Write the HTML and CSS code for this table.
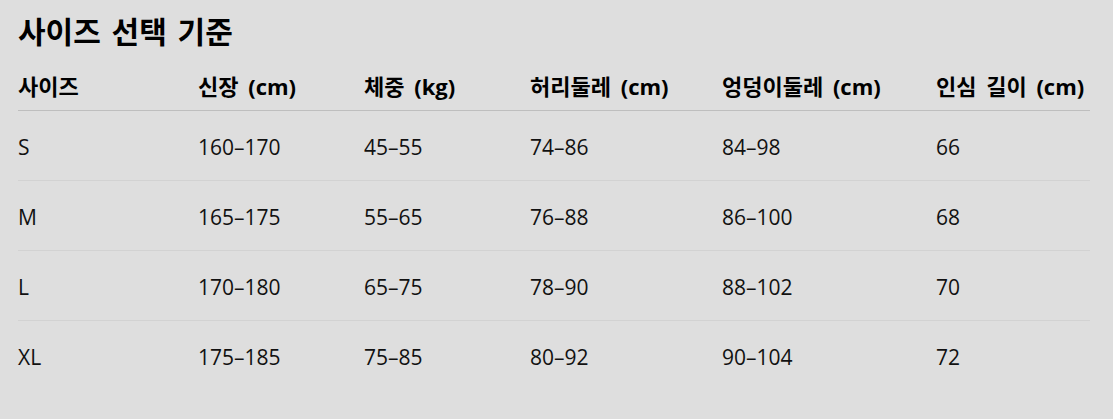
FILE: index.html
```html
<!DOCTYPE html>
<html lang="ko">
<head>
<meta charset="utf-8">
<title>사이즈 선택 기준</title>
<link rel="stylesheet" href="styles.css">
</head>
<body>
<section class="size-guide">
  <h2 class="title">사이즈 선택 기준</h2>
  <table class="size-table">
    <thead>
      <tr>
        <th class="c1">사이즈</th>
        <th class="c2">신장 (cm)</th>
        <th class="c3">체중 (kg)</th>
        <th class="c4">허리둘레 (cm)</th>
        <th class="c5">엉덩이둘레 (cm)</th>
        <th class="c6">인심 길이 (cm)</th>
      </tr>
    </thead>
    <tbody>
      <tr><td>S</td><td>160–170</td><td>45–55</td><td>74–86</td><td>84–98</td><td>66</td></tr>
      <tr><td>M</td><td>165–175</td><td>55–65</td><td>76–88</td><td>86–100</td><td>68</td></tr>
      <tr><td>L</td><td>170–180</td><td>65–75</td><td>78–90</td><td>88–102</td><td>70</td></tr>
      <tr><td>XL</td><td>175–185</td><td>75–85</td><td>80–92</td><td>90–104</td><td>72</td></tr>
    </tbody>
  </table>
</section>
</body>
</html>
```
FILE: styles.css
```css
html, body {
  margin: 0;
  padding: 0;
  background: #dedede;
}
body {
  font-family: "Open Sans", "Noto Sans CJK KR", sans-serif;
  color: #000;
}
.size-guide {
  padding: 12px 23px 0 18px;
}
.title {
  margin: 0;
  font-size: 30px;
  font-weight: 700;
  line-height: 40px;
  word-spacing: 3px;
}
.size-table {
  width: 100%;
  border-collapse: collapse;
  margin-top: 21px;
  table-layout: fixed;
}
.size-table th {
  text-align: left;
  font-size: 22px;
  font-weight: 700;
  padding: 0 0 11px;
  line-height: 26px;
  word-spacing: 4px;
  white-space: nowrap;
  border-bottom: 1px solid #bebebe;
}
.size-table td {
  font-size: 21px;
  padding: 2px 0 0;
  height: 67px;
  line-height: 26px;
  color: #111;
  border-bottom: 1px solid #d2d2d2;
}
.size-table tbody tr:last-child td {
  border-bottom: none;
}
.c1 { width: 180px; }
.c2 { width: 166px; }
.c3 { width: 166px; }
.c4 { width: 192px; }
.c5 { width: 214px; }
.c6 { width: auto; }
```
